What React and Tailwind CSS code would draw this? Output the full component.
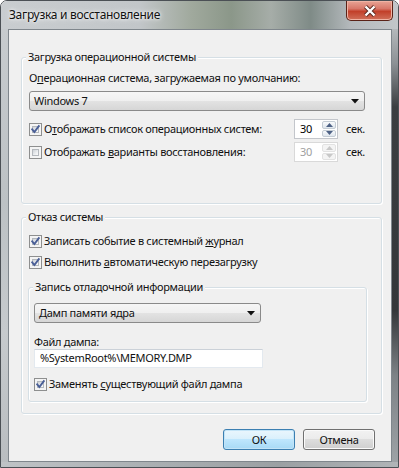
import React from 'react';

// Win7 style "Загрузка и восстановление" dialog

const CheckBox = ({ checked }) => (
  <span className="relative block h-[13px] w-[13px] shrink-0 border border-[#8e8f8f] bg-[#f4f4f4]">
    <span className="absolute inset-[2px] border border-[#b4b8bd] bg-[linear-gradient(135deg,#cdd1d6_0%,#eceef0_60%,#fafafa_100%)]" />
    {checked && (
      <svg className="absolute left-[0px] top-[0px]" width="11" height="11" viewBox="0 0 11 11">
        <path d="M2.2 5.4 L4.4 8 L8.8 2.2" fill="none" stroke="#4a5f97" strokeWidth="1.9" strokeLinecap="square" />
      </svg>
    )}
  </span>
);

const Arrow = () => (
  <svg width="8" height="5" viewBox="0 0 8 5">
    <path d="M0 0 L8 0 L4 4.5 Z" fill="#111" />
  </svg>
);

const Dropdown = ({ value, width }) => (
  <div className={`flex h-[20px] ${width} items-center rounded-[3px] border border-[#8a8a8a] bg-[linear-gradient(#f6f6f6_0%,#efefef_50%,#e3e3e3_50%,#d6d6d6_100%)] pl-[4px] pr-[5px]`}>
    <span className="flex-1 leading-[16px]">{value}</span>
    <Arrow />
  </div>
);

const SpinBox = ({ value, disabled }) => (
  <div className={`flex h-[20px] w-[44px] border bg-white ${disabled ? 'border-[#d9d9d9] text-[#a0a0a0]' : 'border-[#c3c6cb] text-black'}`}>
    <span className="flex-1 pl-[5px] leading-[18px]">{value}</span>
    <div className="flex w-[15px] flex-col gap-px py-px pr-px">
      {['M0 4 L3.5 0 L7 4 Z', 'M0 0 L7 0 L3.5 4 Z'].map((d) => (
        <span
          key={d}
          className={`flex flex-1 items-center justify-center rounded-[2px] border ${disabled ? 'border-[#e2e2e2] bg-[#f4f4f4]' : 'border-[#c4ccd4] bg-[linear-gradient(#f8fafc,#dfe6ed)]'}`}
        >
          <svg width="7" height="4" viewBox="0 0 7 4">
            <path d={d} fill={disabled ? '#c8c8c8' : '#4d6185'} />
          </svg>
        </span>
      ))}
    </div>
  </div>
);

const Group = ({ title, className, children }) => (
  <div className={`relative rounded-[3px] border border-[#d5dfe5] shadow-[inset_1px_1px_0_#ffffff,1px_1px_0_#ffffff] ${className}`}>
    <span className="absolute -top-[9px] left-[4px] bg-[#f0f0f0] px-[2px] leading-[16px]">{title}</span>
    {children}
  </div>
);

const Button = ({ children, primary }) => (
  <button
    className={`flex h-[21px] w-[72px] items-center justify-center rounded-[3px] border leading-[16px] ${
      primary
        ? 'border-[#3c7fb1] bg-[linear-gradient(#eaf6fd_0%,#d9f0fc_50%,#bee6fd_50%,#a7d9f5_100%)] shadow-[inset_0_0_0_1px_#c3e4f7]'
        : 'border-[#707070] bg-[linear-gradient(#f2f2f2_0%,#ebebeb_50%,#dddddd_50%,#cfcfcf_100%)] shadow-[inset_0_0_0_1px_#fafafa]'
    }`}
  >
    {children}
  </button>
);

const App = () => {
  return (
    <div className="flex h-[468px] w-[399px] flex-col overflow-hidden rounded-t-[7px] border border-[#4b5055] font-['Noto_Sans',sans-serif] text-[11px] tracking-[-0.3px] text-[#111]">
      {/* title bar */}
      <div className="flex h-[28px] shrink-0 items-start bg-[linear-gradient(90deg,#c9cdd0_0%,#c2c6c9_35%,#a0a99d_48%,#8b9789_58%,#a6ada8_68%,#7f8b87_78%,#b4b9bc_88%,#c2c6c9_100%)]">
        <span className="pl-[8px] pt-[6px] text-[12px] leading-[16px] [text-shadow:0_0_6px_#ffffff,0_0_3px_#ffffff]">
          Загрузка и восстановление
        </span>
        <div className="ml-auto mr-[5px] flex h-[20px] w-[47px] items-center justify-center rounded-b-[5px] border border-t-0 border-[#5a2217] bg-[linear-gradient(#e8a495_0%,#d8786a_40%,#c2402a_55%,#d0705a_100%)] shadow-[inset_0_0_0_1px_#f0b3a4]">
          <svg width="14" height="12" viewBox="0 0 14 12">
            <path d="M2.5 1.5 L11.5 10.5 M11.5 1.5 L2.5 10.5" stroke="#5b2a20" strokeWidth="4.2" />
            <path d="M2.5 1.5 L11.5 10.5 M11.5 1.5 L2.5 10.5" stroke="#ffffff" strokeWidth="2.4" />
          </svg>
        </div>
      </div>

      <div className="flex h-[433px] shrink-0">
        <div className="w-[7px] bg-[linear-gradient(#c7cbce,#bcc1c4_40%,#c6cacd_70%,#b9bdc0)]" />

        {/* client area */}
        <div className="flex w-[384px] flex-col border border-[#7f868c] bg-[#f0f0f0]">
          <Group title="Загрузка операционной системы" className="ml-[12px] mt-[27px] h-[147px] w-[361px]">
            <div className="flex flex-col pl-[7px] pt-[12px]">
              <span className="leading-[16px]">
                О<u>п</u>ерационная система, загружаемая по умолчанию:
              </span>
              <div className="mt-[5px]">
                <Dropdown value="Windows 7" width="w-[336px]" />
              </div>
              <div className="mt-[8px] flex h-[20px] w-[344px] items-center">
                <CheckBox checked />
                <span className="ml-[2px] flex-1 whitespace-nowrap leading-[16px]">
                  О<u>т</u>ображать список операционных систем:
                </span>
                <SpinBox value="30" />
                <span className="ml-[8px] w-[27px] leading-[16px]">сек.</span>
              </div>
              <div className="mt-[3px] flex h-[20px] w-[344px] items-center">
                <CheckBox />
                <span className="ml-[2px] flex-1 whitespace-nowrap leading-[16px]">
                  Отображать <u>в</u>арианты восстановления:
                </span>
                <SpinBox value="30" disabled />
                <span className="ml-[8px] w-[27px] leading-[16px]">сек.</span>
              </div>
            </div>
          </Group>

          <Group title="Отказ системы" className="ml-[12px] mt-[13px] h-[197px] w-[361px]">
            <div className="flex flex-col pl-[7px] pt-[15px]">
              <div className="flex h-[16px] items-center">
                <CheckBox checked />
                <span className="ml-[2px] leading-[16px]">
                  Записать событие в системный <u>ж</u>урнал
                </span>
              </div>
              <div className="mt-[5px] flex h-[16px] items-center">
                <CheckBox checked />
                <span className="ml-[2px] leading-[16px]">
                  Выполнить <u>а</u>втоматическую перезагрузку
                </span>
              </div>

              <Group title="Запись отладочной информации" className="-ml-[1px] mt-[17px] h-[115px] w-[339px]">
                <div className="flex flex-col pl-[5px] pt-[15px]">
                  <Dropdown value="Дамп памяти ядра" width="w-[227px]" />
                  <span className="mt-[12px] leading-[14px]">Файл дампа:</span>
                  <div className="flex h-[19px] w-[229px] items-center border border-[#e3e9ef] border-t-[#cbd1d8] bg-white pl-[5px]">
                    %SystemRoot%\MEMORY.DMP
                  </div>
                  <div className="mt-[8px] flex h-[16px] items-center">
                    <CheckBox checked />
                    <span className="ml-[2px] leading-[16px]">
                      Заменять <u>с</u>уществующий файл дампа
                    </span>
                  </div>
                </div>
              </Group>
            </div>
          </Group>

          <div className="mt-[15px] flex justify-end gap-[8px] pr-[16px]">
            <Button primary>ОК</Button>
            <Button>Отмена</Button>
          </div>
        </div>

        <div className="w-[6px] bg-[linear-gradient(#b4b8bb_0%,#8c9195_8%,#3b3e41_18%,#34373a_65%,#7d8286_80%,#9da2a6_100%)]" />
      </div>

      <div className="h-[5px] shrink-0 bg-[linear-gradient(90deg,#bfc3c6,#a9aeb1_40%,#9ba0a3_70%,#b0b4b7)]" />
    </div>
  );
};

export default App;
